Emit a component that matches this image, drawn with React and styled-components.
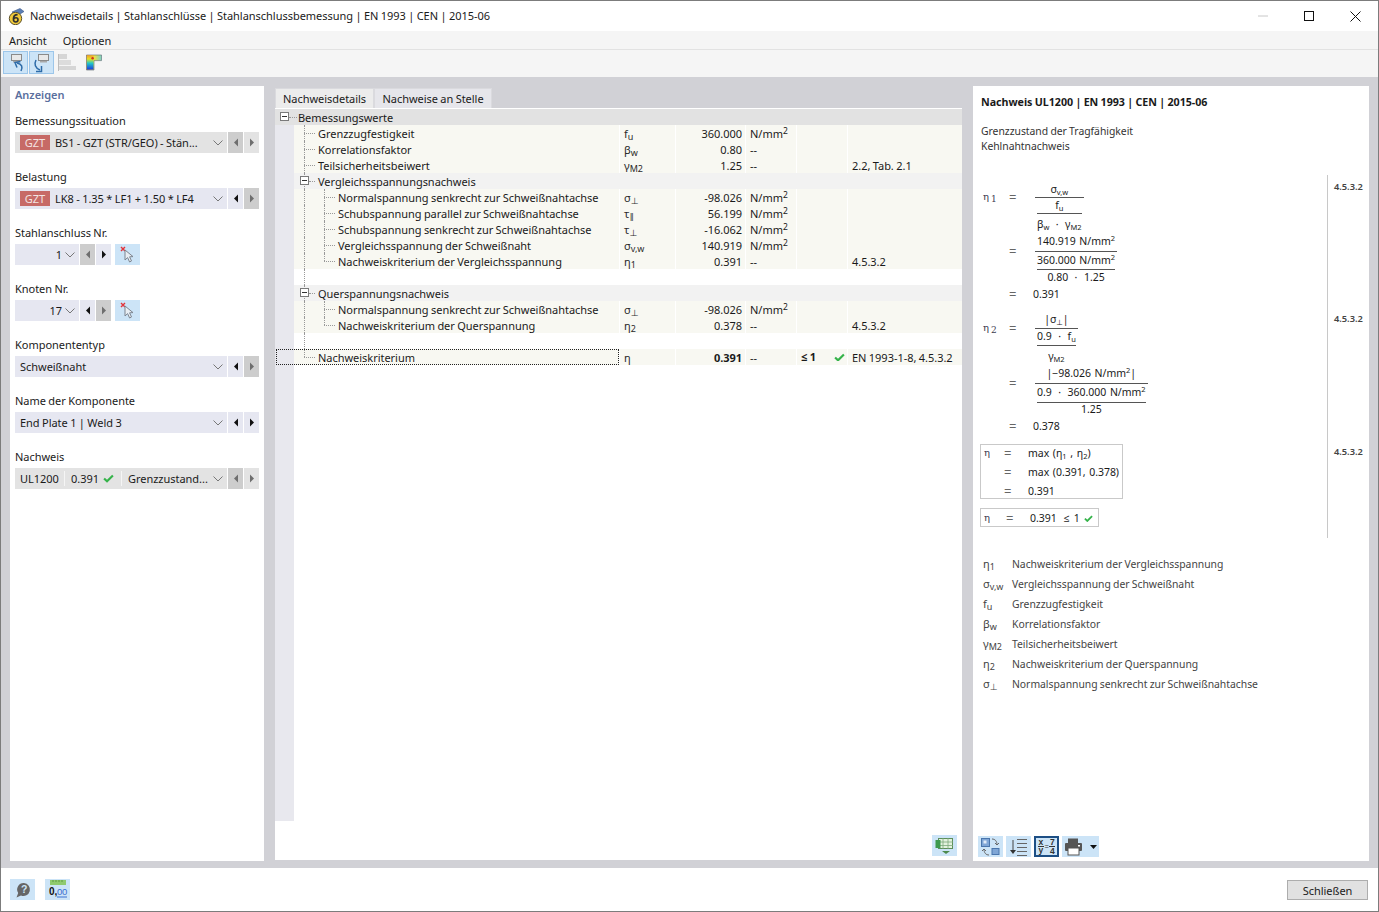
import React from "react";
import styled, { createGlobalStyle } from "styled-components";

const GlobalStyle = createGlobalStyle`
  html, body { margin: 0; padding: 0; background: #fff; }
  body {
    font-family: "Noto Sans", "Open Sans", "DejaVu Sans", sans-serif;
    font-size: 11px;
    letter-spacing: -0.03px;
    word-spacing: -0.4px;
    color: #1a1a1a;
  }
  * { box-sizing: border-box; }
`;

const Win = styled.div`
  width: 1379px;
  height: 912px;
  border: 1px solid #7c7c7c;
  display: flex;
  flex-direction: column;
  overflow: hidden;
  background: #fff;
`;

const TitleBar = styled.div`
  height: 30px;
  display: flex;
  align-items: center;
  padding-left: 7px;
  flex: none;
`;

const TitleText = styled.div`
  margin-left: 5px;
  padding-bottom: 2px;
  flex: 1;
`;

const WinBtn = styled.div`
  width: 46px;
  height: 30px;
  display: flex;
  align-items: center;
  justify-content: center;
`;

const MenuBar = styled.div`
  height: 19px;
  flex: none;
  background: #f5f5f5;
  border-bottom: 1px solid #e2e2e2;
  display: flex;
  align-items: center;
  padding-left: 8px;
  gap: 16px;
`;

const ToolBar = styled.div`
  height: 27px;
  flex: none;
  background: #f5f5f5;
  display: flex;
  align-items: flex-start;
  padding: 1px 0 0 2px;
`;

const ToolBtn = styled.div`
  width: ${p => p.$w || 25}px;
  height: ${p => p.$h || 23}px;
  display: flex;
  align-items: center;
  justify-content: center;
  flex: none;
  margin-right: ${p => p.$mr || 0}px;
  background: ${p => (p.$on ? "#cce4f7" : "transparent")};
  border: ${p => (p.$edge ? 2 : 1)}px solid ${p => (p.$on ? (p.$edge || p.$line || "#cce4f7") : "transparent")};
`;

const Main = styled.div`
  flex: 1;
  background: #d1d1d6;
  display: flex;
  padding: 9px 9px 7px 9px;
  min-height: 0;
`;

const LeftPanel = styled.div`
  width: 254px;
  background: #fff;
  padding: 2px 5px 0;
  flex: none;
  margin-right: 11px;
`;

const PanelTitle = styled.div`
  color: #5a6f9e;
  font-weight: 600;
  height: 16px;
  line-height: 13px;
  margin-bottom: 9px;
`;

const FieldGroup = styled.div`
  height: 56px;
`;

const FieldLabel = styled.div`
  height: 19px;
  line-height: 15px;
`;

const FieldRow = styled.div`
  display: flex;
  height: 21px;
`;

const Combo = styled.div`
  width: ${p => p.$w || 212}px;
  background: ${p => (p.$off ? "#e3e3e3" : "#e6e7f1")};
  display: flex;
  align-items: center;
  padding: 0 4px 0 5px;
  flex: none;
  white-space: nowrap;
`;

const ComboText = styled.span`
  flex: 1;
  text-align: ${p => (p.$right ? "right" : "left")};
`;

const Tag = styled.span`
  background: #c76a66;
  color: #f4e4e3;
  width: 30px;
  height: 15px;
  line-height: 15px;
  text-align: center;
  margin: 0 5px 0 0;
  flex: none;
`;

const StepBtn = styled.div`
  width: 15px;
  margin-left: 1px;
  flex: none;
  background: ${p => (p.$tone === "dark" ? "#cdcdcd" : p.$tone === "light" ? "#e3e3e3" : "#e6e7f1")};
  display: flex;
  align-items: center;
  justify-content: center;
`;

const PickBtn = styled.div`
  width: 25px;
  margin-left: 4px;
  background: #cce4f7;
  display: flex;
  align-items: center;
  justify-content: center;
`;

const CheckCell = styled.span`
  display: inline-flex;
  align-items: center;
  gap: 4px;
  width: ${p => p.$w}px;
  flex: none;
  margin-right: 6px;
  border-right: 1px solid #f5f5f5;
  height: 15px;
`;

const MidCol = styled.div`
  width: 687px;
  flex: none;
  margin-right: 11px;
  padding-top: 2px;
  display: flex;
  flex-direction: column;
`;

const Tabs = styled.div`
  display: flex;
  height: 20px;
  flex: none;
`;

const Tab = styled.div`
  width: ${p => p.$w}px;
  line-height: 19px;
  text-align: center;
  background: ${p => (p.$active ? "#ececec" : "#e6e6eb")};
  border: 1px solid #dadade;
  border-bottom: none;
`;

const MidPanel = styled.div`
  flex: 1;
  background: #fff;
  padding-top: 1px;
  position: relative;
  margin-bottom: 1px;
`;

const Row = styled.div`
  display: grid;
  grid-template-columns: 19px 325px 56px 70px 51px 51px 115px;
  height: 16px;
  line-height: 18px;
  position: relative;
  white-space: nowrap;
`;

const Gutter = styled.div`
  background: ${p => (p.$head ? "#e2e2e2" : "#e8e8ee")};
`;

const bgFor = kind => ({ head: "#e2e2e2", sub: "#f2f2f2", blank: "#fff" }[kind] || "#f8f8f2");

const NameCell = styled.div`
  background: ${p => bgFor(p.$kind)};
  padding-left: ${p => p.$pad}px;
  position: relative;
  height: 16px;
`;

const ValCell = styled.div`
  background: ${p => bgFor(p.$kind)};
  border-left: 1px solid ${p => (p.$kind === "data" ? "#fff" : "transparent")};
  padding: 0 ${p => (p.$right ? 3 : 0)}px 0 4px;
  text-align: ${p => (p.$right ? "right" : "left")};
  font-weight: ${p => (p.$bold ? 700 : 400)};
  display: ${p => (p.$split ? "flex" : "block")};
  justify-content: space-between;
  align-items: center;
  height: 16px;
`;

const Sym = styled.span`
  color: #2a2a2a;
  sub { font-size: 9px; line-height: 0; vertical-align: -2px; }
`;

const Sup = styled.sup`
  font-size: 8.5px;
  line-height: 0;
  vertical-align: 4px;
`;

const VDots = styled.span`
  position: absolute;
  left: ${p => p.$x}px;
  top: 0;
  height: ${p => (p.$half ? 8 : 16)}px;
  border-left: 1px dotted #999;
`;

const HDots = styled.span`
  position: absolute;
  left: ${p => p.$x}px;
  width: ${p => p.$w || 11}px;
  top: 8px;
  border-top: 1px dotted #999;
`;

const Minus = styled.span`
  position: absolute;
  left: ${p => p.$x}px;
  top: 3px;
  width: 9px;
  height: 9px;
  border: 1px solid #7a7a7a;
  background: #fff;
  &::after {
    content: "";
    position: absolute;
    left: 1px;
    right: 1px;
    top: 3px;
    border-top: 1px solid #333;
  }
`;

const Focus = styled.span`
  position: absolute;
  left: 1px;
  top: 0;
  bottom: 0;
  width: 343px;
  border: 1px dotted #222;
  pointer-events: none;
`;

const Filler = styled.div`
  width: 19px;
  height: 456px;
  background: #e8e8ee;
`;

const CornerTool = styled.div`
  position: absolute;
  right: 5px;
  bottom: 4px;
`;

const RightPanel = styled.div`
  width: 396px;
  flex: none;
  background: #fff;
  display: flex;
  flex-direction: column;
  padding: 9px 0 4px 0;
`;

const ReportTitle = styled.div`
  font-weight: 700;
  font-size: 10.7px;
  line-height: 14px;
  padding-left: 8px;
`;

const ReportSub = styled.div`
  padding-left: 8px;
  font-size: 10.4px;
  line-height: 15px;
  margin-top: 15px;
  color: #333;
  margin-bottom: 21px;
`;

const EqGroup = styled.div`
  display: flex;
  height: ${p => p.$h}px;
`;

const EqBody = styled.div`
  width: 354px;
  flex: none;
  padding: ${p => p.$top || 0}px 0 0 8px;
`;

const RefCol = styled.div`
  flex: 1;
  border-left: 1px solid #c8c8c8;
  padding: ${p => p.$top || 0}px 0 0 6px;
  font-size: 9.3px;
  font-weight: 600;
  line-height: 14px;
  color: #444;
`;

const EqRow = styled.div`
  display: grid;
  grid-template-columns: ${p => p.$cols || "28px 26px"} auto;
  justify-content: start;
  align-items: start;
  font-size: 10.5px;
  word-spacing: 1px;
  line-height: 14px;
  margin-bottom: ${p => p.$mb || 0}px;
  white-space: nowrap;
`;

const MathSym = styled.span`
  font-family: "DejaVu Serif", serif;
  font-size: 10px;
  color: #3c3c50;
  margin-top: ${p => p.$top || 0}px;
  padding-left: 2px;
  sub { font-size: 9px; line-height: 0; vertical-align: -2px; margin-left: 2px; }
`;

const MathEq = styled.span`
  font-size: 13px;
  color: #666;
  margin-top: ${p => p.$top || 0}px;
`;

const Result = styled.span`
  margin-left: -2px;
`;

const Frac = styled.span`
  display: inline-flex;
  flex-direction: column;
  align-items: stretch;
  text-align: center;
`;

const Num = styled.span`
  border-bottom: 1px solid #555;
  padding-top: ${p => p.$pt || 0}px;
  height: ${p => p.$h || 15}px;
  line-height: 14px;
`;

const Den = styled.span`
  height: ${p => p.$h || 15}px;
  line-height: ${p => p.$h || 15}px;
`;

const InnerFrac = styled(Frac)`
  margin: 0 2px;
  display: flex;
`;

const Times = styled.span`
  margin: 0 6.5px;
`;

const MSub = styled.sub`
  font-size: 7.5px;
  line-height: 0;
  vertical-align: -2px;
`;

const MSup = styled.sup`
  font-size: 7.5px;
  line-height: 0;
  vertical-align: 4px;
`;

const BoxEq = styled.div`
  border: 1px solid #c9c9c9;
  width: ${p => p.$w}px;
  height: ${p => p.$h}px;
  margin: 0 0 ${p => p.$mb || 0}px -1px;
  padding: ${p => p.$pt || 0}px 0 0 1px;
`;

const Le = styled.span`
  margin: 0 4px 0 7px;
`;

const CheckWrap = styled.span`
  margin-left: 4px;
`;

const Legend = styled.div`
  padding: 16px 0 0 10px;
`;

const LegendRow = styled.div`
  display: flex;
  height: 20px;
  line-height: 20px;
  font-size: 10.4px;
  color: #444;
`;

const LegendSym = styled.span`
  width: 29px;
  flex: none;
  font-size: 11px;
  sub { font-size: 9px; line-height: 0; vertical-align: -2px; }
`;

const BottomTools = styled.div`
  margin-top: auto;
  display: flex;
  padding-left: 5px;
  gap: 3px;
`;

const Footer = styled.div`
  height: 43px;
  flex: none;
  display: flex;
  align-items: center;
  padding: 0 10px 0 9px;
  gap: 10px;
`;

const CloseBtn = styled.div`
  margin-left: auto;
  width: 81px;
  height: 20px;
  background: #e1e1e1;
  border: 1px solid #adadad;
  text-align: center;
  line-height: 20px;
`;

const Arrow = ({ dir, off }) => (
  <svg width="6" height="9" viewBox="0 0 6 9">
    <path d={dir === "l" ? "M5 0.5V8.5L1 4.5Z" : "M1 0.5V8.5L5 4.5Z"} fill={off ? "#6e6e6e" : "#111"} />
  </svg>
);

const Chevron = () => (
  <svg width="10" height="6" viewBox="0 0 10 6" style={{ flex: "none", marginLeft: 3 }}>
    <path d="M0.5 0.5L5 5L9.5 0.5" fill="none" stroke="#777" strokeWidth="1" />
  </svg>
);

const Check = ({ size = 11 }) => (
  <svg width={size} height={size * 0.8} viewBox="0 0 11 9">
    <path d="M1 4.5L4 7.5L10 1.5" fill="none" stroke="#35b34a" strokeWidth="2.2" />
  </svg>
);

const Picker = () => (
  <svg width="16" height="17" viewBox="0 0 16 17">
    <path d="M1 1L5 5M5 1L1 5" stroke="#e2343a" strokeWidth="1.4" />
    <path d="M5 4L5 14L7.6 11.6L9.6 16L11.5 15L9.6 10.8L13 10.6Z" fill="#e8eef4" stroke="#7d8590" strokeWidth="1" />
  </svg>
);

const AppIcon = () => (
  <svg width="17" height="17" viewBox="0 0 17 17">
    <path d="M4 4L12 0.5L16 3.5L9 8Z" fill="#5b7fb5" stroke="#3a5686" strokeWidth="0.6" />
    <circle cx="7.5" cy="10.5" r="6.2" fill="#f0c93a" stroke="#5d5330" strokeWidth="1" />
    <path d="M9.6 6.6C7 6.6 5.4 8.4 5.4 11C5.4 13 6.4 14 7.8 14C9.2 14 10 13 10 11.8C10 10.6 9.2 9.8 8 9.8C6.8 9.8 5.8 10.6 5.6 11.4" fill="none" stroke="#2f2f2f" strokeWidth="1.6" />
  </svg>
);

const UndoIcon = ({ flip }) => (
  <svg width="23" height="21" viewBox="0 0 23 21">
    <rect x={flip ? 8.5 : 7.5} y="2.5" width="10" height="6" fill="#e8e8e8" stroke="#8a8a8a" />
    <rect x={flip ? 10 : 9} y="9" width="7" height="1.5" fill="#a8a8a8" />
    {flip ? (
      <>
        <path d="M6 8C4 12 5 16 10 18" fill="none" stroke="#2d6ba8" strokeWidth="1.5" />
        <path d="M6 19.5H11.5V14" fill="none" stroke="#2d6ba8" strokeWidth="1.5" />
      </>
    ) : (
      <>
        <path d="M13 11C18 12 19 15 17 19" fill="none" stroke="#2d6ba8" strokeWidth="1.5" />
        <path d="M13 15.5L11 10.5L16.5 9.5" fill="none" stroke="#2d6ba8" strokeWidth="1.5" />
      </>
    )}
  </svg>
);

const BarsIcon = () => (
  <svg width="18" height="17" viewBox="0 0 18 17">
    <rect x="0" y="0" width="9" height="5" fill="#d6d6d6" />
    <rect x="0" y="6" width="13" height="5" fill="#dcdcdc" />
    <rect x="0" y="12" width="18" height="4" fill="#d6d6d6" />
    <path d="M0.5 0V17" stroke="#bdbdbd" />
  </svg>
);

const ColorIcon = () => (
  <svg width="17" height="17" viewBox="0 0 17 17">
    <defs>
      <linearGradient id="rb" x1="0" y1="1" x2="0" y2="0">
        <stop offset="0" stopColor="#1a3be0" />
        <stop offset="0.45" stopColor="#22c8c8" />
        <stop offset="0.75" stopColor="#e8e020" />
        <stop offset="1" stopColor="#f0a030" />
      </linearGradient>
      <linearGradient id="rb2" x1="0" y1="0" x2="1" y2="0">
        <stop offset="0" stopColor="#e8a020" />
        <stop offset="0.5" stopColor="#f0e040" />
        <stop offset="1" stopColor="#7ad2c8" />
      </linearGradient>
    </defs>
    <path d="M0.5 0.5H16.5V6.5H8.5V16.5H0.5Z" fill="url(#rb2)" stroke="#55606a" strokeWidth="0.6" />
    <rect x="1" y="1" width="7" height="15" fill="url(#rb)" />
    <circle cx="7" cy="4" r="1.3" fill="#d03020" />
  </svg>
);

const TableIcon = () => (
  <svg width="19" height="19" viewBox="0 0 19 19">
    <rect x="3.5" y="2.5" width="14" height="10" fill="#e3f2de" stroke="#5c8e5a" />
    <path d="M8 2V13M13 2V13M3 6H18M3 9.5H18" stroke="#7eaa7c" strokeWidth="0.8" />
    <rect x="0.5" y="4" width="5" height="8" fill="#3e9a4e" />
    <path d="M7 15H15L11 18Z" fill="#4c8a4c" />
  </svg>
);

const SwapIcon = () => (
  <svg width="21" height="20" viewBox="0 0 21 20">
    <rect x="1.5" y="1.5" width="8" height="8" fill="#7fa6d6" stroke="#4a76ad" />
    <rect x="3.5" y="3.5" width="3" height="3" fill="#dfeaf7" />
    <rect x="12" y="11.5" width="7" height="6" fill="#7fa6d6" stroke="#4a76ad" />
    <path d="M12 2C15 2 17 4 17 8M17 8L15 6M17 8L19 6" fill="none" stroke="#666" />
    <path d="M9 18C6 18 4 16 4 12M4 12L2 14M4 12L6 14" fill="none" stroke="#666" />
  </svg>
);

const ListIcon = () => (
  <svg width="20" height="20" viewBox="0 0 20 20">
    <path d="M8 2.5H18M8 6.5H18M8 10.5H18M8 14.5H18M8 18.5H18" stroke="#666" />
    <path d="M4 3V14" stroke="#444" />
    <path d="M1 13H7L4 17Z" fill="#333" />
  </svg>
);

const FormulaIcon = () => (
  <svg width="21" height="17" viewBox="0 0 21 17">
    <text x="2.5" y="7" fontSize="8.5" fontWeight="700" fontFamily="Liberation Sans" fill="#333">x</text>
    <path d="M2 8.5H8" stroke="#333" />
    <text x="2.5" y="15" fontSize="8.5" fontWeight="700" fontFamily="Liberation Sans" fill="#333">y</text>
    <text x="8.5" y="11" fontSize="7.5" fontFamily="Liberation Sans" fill="#333">=</text>
    <text x="14" y="7" fontSize="8.5" fontWeight="700" fontFamily="Liberation Sans" fill="#333">7</text>
    <path d="M13 8.5H19" stroke="#333" />
    <text x="14" y="15.5" fontSize="8.5" fontWeight="700" fontFamily="Liberation Sans" fill="#333">4</text>
  </svg>
);

const PrintIcon = () => (
  <svg width="34" height="18" viewBox="0 0 34 18">
    <rect x="4" y="0.5" width="10" height="5" fill="#555" />
    <rect x="1" y="5" width="17" height="8" rx="1" fill="#555" />
    <rect x="4" y="10" width="11" height="7" fill="#fff" stroke="#555" />
    <rect x="14" y="7" width="2" height="1.5" fill="#fff" />
    <path d="M26 7H33L29.5 11Z" fill="#111" />
  </svg>
);

const HelpIcon = () => (
  <svg width="18" height="18" viewBox="0 0 18 18">
    <path d="M10 2A6.5 6.5 0 1 1 7 14.5L2.5 16.5L4.2 12A6.5 6.5 0 0 1 10 2Z" fill="#666" />
    <text x="7" y="12.4" fontSize="10.5" fontWeight="700" fontFamily="Liberation Sans" fill="#cce4f7">?</text>
  </svg>
);

const DecimalIcon = () => (
  <svg width="20" height="19" viewBox="0 0 20 19">
    <rect x="2" y="0" width="16" height="5" fill="#8fca6e" />
    <path d="M5 0V2M8 0V2M11 0V2M14 0V2" stroke="#5e9a44" />
    <text x="1" y="15" fontSize="10" fontWeight="700" fontFamily="Liberation Sans" fill="#111">0,</text>
    <text x="9" y="15" fontSize="9.5" letterSpacing="-0.2" fontFamily="Liberation Sans" fill="#3a70d0">00</text>
    <path d="M9 17H19" stroke="#3a70d0" />
  </svg>
);

const rows = [
  { kind: "head", name: "Bemessungswerte", level: 0 },
  { kind: "data", name: "Grenzzugfestigkeit", level: 1, sym: <>f<sub>u</sub></>, val: "360.000", unit: "mm" },
  { kind: "data", name: "Korrelationsfaktor", level: 1, sym: <>β<sub>w</sub></>, val: "0.80", unit: "--" },
  { kind: "data", name: "Teilsicherheitsbeiwert", level: 1, sym: <>γ<sub>M2</sub></>, val: "1.25", unit: "--", ref: "2.2, Tab. 2.1" },
  { kind: "sub", name: "Vergleichsspannungsnachweis", level: 1 },
  { kind: "data", name: "Normalspannung senkrecht zur Schweißnahtachse", level: 2, sym: <>σ<sub>⊥</sub></>, val: "-98.026", unit: "mm" },
  { kind: "data", name: "Schubspannung parallel zur Schweißnahtachse", level: 2, sym: <>τ<sub>∥</sub></>, val: "56.199", unit: "mm" },
  { kind: "data", name: "Schubspannung senkrecht zur Schweißnahtachse", level: 2, sym: <>τ<sub>⊥</sub></>, val: "-16.062", unit: "mm" },
  { kind: "data", name: "Vergleichsspannung der Schweißnaht", level: 2, sym: <>σ<sub>v,w</sub></>, val: "140.919", unit: "mm" },
  { kind: "data", name: "Nachweiskriterium der Vergleichsspannung", level: 2, last: true, sym: <>η<sub>1</sub></>, val: "0.391", unit: "--", ref: "4.5.3.2" },
  { kind: "blank", level: 1 },
  { kind: "sub", name: "Querspannungsnachweis", level: 1 },
  { kind: "data", name: "Normalspannung senkrecht zur Schweißnahtachse", level: 2, sym: <>σ<sub>⊥</sub></>, val: "-98.026", unit: "mm" },
  { kind: "data", name: "Nachweiskriterium der Querspannung", level: 2, last: true, sym: <>η<sub>2</sub></>, val: "0.378", unit: "--", ref: "4.5.3.2" },
  { kind: "blank", level: 1 },
  { kind: "data", name: "Nachweiskriterium", level: 1, end: true, sym: "η", val: "0.391", unit: "--", bold: true, flag: true, ref: "EN 1993-1-8, 4.5.3.2" },
];

const TreeRow = ({ r }) => {
  const pad = r.level === 2 ? 44 : r.level === 1 ? 24 : 4;
  const isGroup = r.kind === "sub" || r.kind === "head";
  return (
    <Row>
      <Gutter $head={r.kind === "head"} />
      <NameCell $kind={r.kind} $pad={pad}>
        {r.level >= 1 && <VDots $x={10} $half={r.end} />}
        {r.level === 2 && <VDots $x={30} $half={r.last} />}
        {r.level === 1 && !isGroup && r.name && <HDots $x={10} />}
        {r.level === 2 && <HDots $x={30} />}
        {r.kind === "sub" && <Minus $x={6} />}
        {r.kind === "sub" && <HDots $x={15} $w={6} />}
        {r.kind === "head" && <HDots $x={-5} $w={8} />}
        {r.kind === "head" && <Minus $x={-14} />}
        {r.name}
      </NameCell>
      <ValCell $kind={r.kind}><Sym>{r.sym}</Sym></ValCell>
      <ValCell $kind={r.kind} $right $bold={r.bold}>{r.val}</ValCell>
      <ValCell $kind={r.kind}>
        {r.unit === "mm" ? <>N/mm<Sup>2</Sup></> : r.unit}
      </ValCell>
      <ValCell $kind={r.kind} $split={r.flag} $bold={r.flag}>
        {r.flag && <span>≤ 1</span>}
        {r.flag && <span style={{ marginRight: 2, display: "flex" }}><Check /></span>}
      </ValCell>
      <ValCell $kind={r.kind}>{r.ref}</ValCell>
      {r.end && <Focus />}
    </Row>
  );
};

const Field = ({ label, left, right, children, width, off, pick }) => (
  <FieldGroup>
    <FieldLabel>{label}</FieldLabel>
    <FieldRow>
      <Combo $w={width} $off={off}>{children}<Chevron /></Combo>
      <StepBtn $tone={left}><Arrow dir="l" off={left !== "on"} /></StepBtn>
      <StepBtn $tone={right}><Arrow dir="r" off={right !== "on"} /></StepBtn>
      {pick && <PickBtn><Picker /></PickBtn>}
    </FieldRow>
  </FieldGroup>
);

const legend = [
  [<>η<sub>1</sub></>, "Nachweiskriterium der Vergleichsspannung"],
  [<>σ<sub>v,w</sub></>, "Vergleichsspannung der Schweißnaht"],
  [<>f<sub>u</sub></>, "Grenzzugfestigkeit"],
  [<>β<sub>w</sub></>, "Korrelationsfaktor"],
  [<>γ<sub>M2</sub></>, "Teilsicherheitsbeiwert"],
  [<>η<sub>2</sub></>, "Nachweiskriterium der Querspannung"],
  [<>σ<sub>⊥</sub></>, "Normalspannung senkrecht zur Schweißnahtachse"],
];

export default function App() {
  return (
    <Win>
      <GlobalStyle />
      <TitleBar>
        <AppIcon />
        <TitleText>Nachweisdetails | Stahlanschlüsse | Stahlanschlussbemessung | EN 1993 | CEN | 2015-06</TitleText>
        <WinBtn>
          <svg width="10" height="2" viewBox="0 0 10 2"><path d="M0 1H10" stroke="#c8c8c8" /></svg>
        </WinBtn>
        <WinBtn>
          <svg width="10" height="10" viewBox="0 0 10 10"><rect x="0.5" y="0.5" width="9" height="9" fill="none" stroke="#111" /></svg>
        </WinBtn>
        <WinBtn>
          <svg width="11" height="11" viewBox="0 0 11 11"><path d="M0.5 0.5L10.5 10.5M10.5 0.5L0.5 10.5" stroke="#111" /></svg>
        </WinBtn>
      </TitleBar>
      <MenuBar>
        <span>Ansicht</span>
        <span>Optionen</span>
      </MenuBar>
      <ToolBar>
        <ToolBtn $on $line="#9cc6ea" $mr={1}><UndoIcon /></ToolBtn>
        <ToolBtn $on $line="#9cc6ea" $mr={3}><UndoIcon flip /></ToolBtn>
        <ToolBtn $w={20} $mr={8}><BarsIcon /></ToolBtn>
        <ToolBtn $w={18}><ColorIcon /></ToolBtn>
      </ToolBar>
      <Main>
        <LeftPanel>
          <PanelTitle>Anzeigen</PanelTitle>
          <Field label="Bemessungssituation" left="dark" right="light" off>
            <Tag>GZT</Tag><ComboText>BS1 - GZT (STR/GEO) - Stän...</ComboText>
          </Field>
          <Field label="Belastung" left="on" right="dark">
            <Tag>GZT</Tag><ComboText>LK8 - 1.35 * LF1 + 1.50 * LF4</ComboText>
          </Field>
          <Field label="Stahlanschluss Nr." left="dark" right="on" width={64} pick>
            <ComboText $right>1</ComboText>
          </Field>
          <Field label="Knoten Nr." left="on" right="dark" width={64} pick>
            <ComboText $right>17</ComboText>
          </Field>
          <Field label="Komponententyp" left="on" right="dark">
            <ComboText>Schweißnaht</ComboText>
          </Field>
          <Field label="Name der Komponente" left="on" right="on">
            <ComboText>End Plate 1 | Weld 3</ComboText>
          </Field>
          <Field label="Nachweis" left="dark" right="light" off>
            <CheckCell $w={45}>UL1200</CheckCell>
            <CheckCell $w={51}>0.391 <Check /></CheckCell>
            <ComboText>Grenzzustand...</ComboText>
          </Field>
        </LeftPanel>

        <MidCol>
          <Tabs>
            <Tab $w={99} $active>Nachweisdetails</Tab>
            <Tab $w={118}>Nachweise an Stelle</Tab>
          </Tabs>
          <MidPanel>
            {rows.map((r, i) => <TreeRow key={i} r={r} />)}
            <Filler />
            <CornerTool>
              <ToolBtn $on $h={21}><TableIcon /></ToolBtn>
            </CornerTool>
          </MidPanel>
        </MidCol>

        <RightPanel>
          <ReportTitle>Nachweis UL1200 | EN 1993 | CEN | 2015-06</ReportTitle>
          <ReportSub>Grenzzustand der Tragfähigkeit<br />Kehlnahtnachweis</ReportSub>

          <EqGroup $h={135}>
            <EqBody $top={7}>
              <EqRow>
                <MathSym $top={8}>η<sub>1</sub></MathSym>
                <MathEq $top={8}>=</MathEq>
                <Frac>
                  <Num $h={16}>σ<MSub>v,w</MSub></Num>
                  <InnerFrac>
                    <Num $h={16}>f<MSub>u</MSub></Num>
                    <Den $h={20}>β<MSub>w</MSub><Times>·</Times>γ<MSub>M2</MSub></Den>
                  </InnerFrac>
                </Frac>
              </EqRow>
              <EqRow $mb={2}>
                <span />
                <MathEq $top={10}>=</MathEq>
                <Frac>
                  <Num $h={18}>140.919 N/mm<MSup>2</MSup></Num>
                  <InnerFrac>
                    <Num $h={18} $pt={1}>360.000 N/mm<MSup>2</MSup></Num>
                    <Den>0.80<Times>·</Times>1.25</Den>
                  </InnerFrac>
                </Frac>
              </EqRow>
              <EqRow>
                <span />
                <MathEq>=</MathEq>
                <Result>0.391</Result>
              </EqRow>
            </EqBody>
            <RefCol $top={5}>4.5.3.2</RefCol>
          </EqGroup>

          <EqGroup $h={133}>
            <EqBody $top={2}>
              <EqRow>
                <MathSym $top={9}>η<sub>2</sub></MathSym>
                <MathEq $top={9}>=</MathEq>
                <Frac>
                  <Num $h={17}>|σ<MSub>⊥</MSub>|</Num>
                  <InnerFrac>
                    <Num $h={17}>0.9<Times>·</Times>f<MSub>u</MSub></Num>
                    <Den $h={20}>γ<MSub>M2</MSub></Den>
                  </InnerFrac>
                </Frac>
              </EqRow>
              <EqRow $mb={3}>
                <span />
                <MathEq $top={10}>=</MathEq>
                <Frac>
                  <Num $h={18}>|−98.026 N/mm<MSup>2</MSup>|</Num>
                  <InnerFrac>
                    <Num $h={19} $pt={1}>0.9<Times>·</Times>360.000 N/mm<MSup>2</MSup></Num>
                    <Den $h={13}>1.25</Den>
                  </InnerFrac>
                </Frac>
              </EqRow>
              <EqRow>
                <span />
                <MathEq>=</MathEq>
                <Result>0.378</Result>
              </EqRow>
            </EqBody>
            <RefCol $top={2}>4.5.3.2</RefCol>
          </EqGroup>

          <EqGroup $h={95}>
            <EqBody $top={1}>
              <BoxEq $w={143} $h={55} $pt={1} $mb={9}>
                <EqRow $cols="22px 24px" $mb={5}>
                  <MathSym>η</MathSym><MathEq>=</MathEq>
                  <span>max (η<MSub>1</MSub> , η<MSub>2</MSub>)</span>
                </EqRow>
                <EqRow $cols="22px 24px" $mb={5}>
                  <span /><MathEq>=</MathEq><span>max (0.391,  0.378)</span>
                </EqRow>
                <EqRow $cols="22px 24px">
                  <span /><MathEq>=</MathEq><span>0.391</span>
                </EqRow>
              </BoxEq>
              <BoxEq $w={119} $h={19} $pt={2}>
                <EqRow $cols="24px 24px">
                  <MathSym>η</MathSym><MathEq>=</MathEq>
                  <span>0.391<Le>≤</Le>1<CheckWrap><Check size={9} /></CheckWrap></span>
                </EqRow>
              </BoxEq>
            </EqBody>
            <RefCol $top={2}>4.5.3.2</RefCol>
          </EqGroup>

          <Legend>
            {legend.map(([s, t], i) => (
              <LegendRow key={i}><LegendSym>{s}</LegendSym><span>{t}</span></LegendRow>
            ))}
          </Legend>

          <BottomTools>
            <ToolBtn $on $h={21}><SwapIcon /></ToolBtn>
            <ToolBtn $on $h={21}><ListIcon /></ToolBtn>
            <ToolBtn $on $h={21} $edge="#1d4f85"><FormulaIcon /></ToolBtn>
            <ToolBtn $on $w={37} $h={21}><PrintIcon /></ToolBtn>
          </BottomTools>
        </RightPanel>
      </Main>
      <Footer>
        <ToolBtn $on $h={21}><HelpIcon /></ToolBtn>
        <ToolBtn $on $h={21}><DecimalIcon /></ToolBtn>
        <CloseBtn>Schließen</CloseBtn>
      </Footer>
    </Win>
  );
}
